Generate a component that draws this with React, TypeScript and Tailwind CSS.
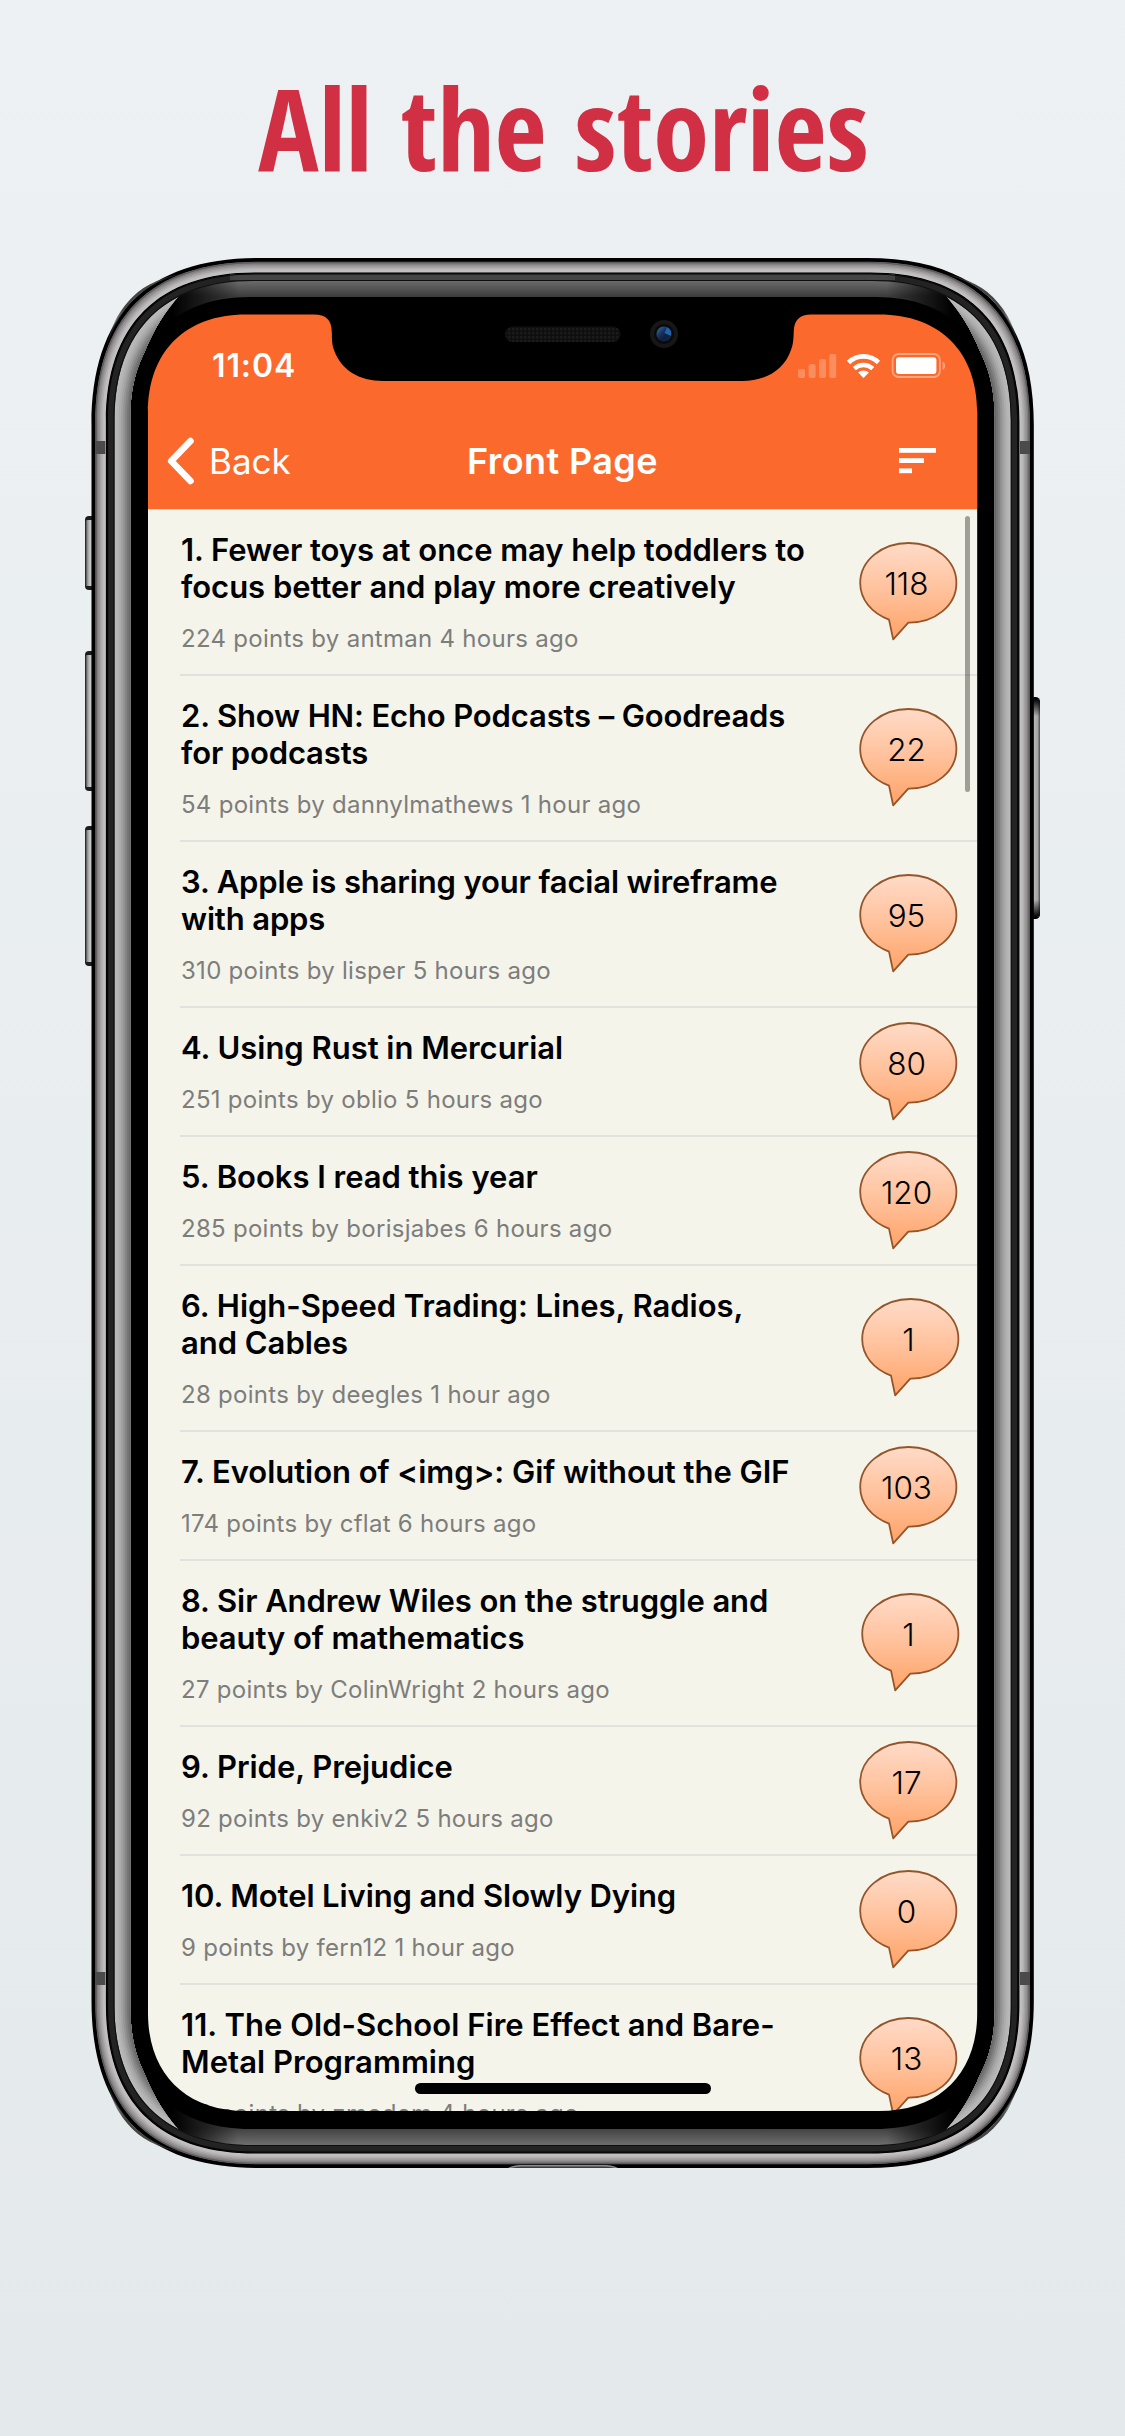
type Story = {
  lines: string[];
  meta: string;
  comments: number;
  tracking?: string;
  nudge?: boolean;
};

const STORIES: Story[] = [
  { lines: ["1. Fewer toys at once may help toddlers to", "focus better and play more creatively"], meta: "224 points by antman 4 hours ago", comments: 118 },
  { lines: ["2. Show HN: Echo Podcasts – Goodreads", "for podcasts"], meta: "54 points by dannylmathews 1 hour ago", comments: 22, tracking: "tracking-[-0.14px]" },
  { lines: ["3. Apple is sharing your facial wireframe", "with apps"], meta: "310 points by lisper 5 hours ago", comments: 95, tracking: "tracking-[-0.14px]" },
  { lines: ["4. Using Rust in Mercurial"], meta: "251 points by oblio 5 hours ago", comments: 80 },
  { lines: ["5. Books I read this year"], meta: "285 points by borisjabes 6 hours ago", comments: 120 },
  { lines: ["6. High-Speed Trading: Lines, Radios,", "and Cables"], meta: "28 points by deegles 1 hour ago", comments: 1, nudge: true },
  { lines: ["7. Evolution of <img>: Gif without the GIF"], meta: "174 points by cflat 6 hours ago", comments: 103 },
  { lines: ["8. Sir Andrew Wiles on the struggle and", "beauty of mathematics"], meta: "27 points by ColinWright 2 hours ago", comments: 1, tracking: "tracking-[-0.07px]", nudge: true },
  { lines: ["9. Pride, Prejudice"], meta: "92 points by enkiv2 5 hours ago", comments: 17 },
  { lines: ["10. Motel Living and Slowly Dying"], meta: "9 points by fern12 1 hour ago", comments: 0, tracking: "tracking-[-0.1px]" },
  { lines: ["11. The Old-School Fire Effect and Bare-", "Metal Programming"], meta: "46 points by zmodem 4 hours ago", comments: 13, tracking: "tracking-[0.04px]" },
];

/** Rounded outline of the handset, inset from its outer edge. */
function contour(inset: number) {
  const x0 = 91.5 + inset;
  const x1 = 1033.8 - inset;
  const y0 = 258 + inset;
  const y1 = 2168 - inset;
  const e = 167 - 1.22 * inset;
  const k = e * (1 - (0.665 - 0.001 * inset));
  return [
    `M${x0 + e} ${y0}H${x1 - e}`,
    `C${x1 - k} ${y0} ${x1} ${y0 + k} ${x1} ${y0 + e}`,
    `V${y1 - e}`,
    `C${x1} ${y1 - k} ${x1 - k} ${y1} ${x1 - e} ${y1}`,
    `H${x0 + e}`,
    `C${x0 + k} ${y1} ${x0} ${y1 - k} ${x0} ${y1 - e}`,
    `V${y0 + e}`,
    `C${x0} ${y0 + k} ${x0 + k} ${y0} ${x0 + e} ${y0}Z`,
  ].join("");
}

/** Screen cut-out including the sensor notch. */
const SCREEN =
  "M246 314.6H314C326 314.6 331.5 320 331.8 332C332 340 332 345 334 350C341 370 359 381 383 381H742C766 381 784 370 791 350C793 345 793.5 340 793.7 332C794 320 800 314.6 811 314.6H879C940 314.6 977.2 352 977.2 412.6V2013C977.2 2073 940 2111 879 2111H246C185 2111 148 2073 148 2013V412.6C148 352 185 314.6 246 314.6Z";

const RIM = ["#6f6d6e", "#838082", "#949193", "#a5a2a4", "#b3b0b2", "#bfbcbe", "#c3c0c2"];
const GLARE = ["#b9b9b9", "#b5b5b5", "#adadad", "#a2a2a2", "#949494", "#848484", "#757575", "#666666"];

function SideGlare({ id }: { id: string }) {
  return (
    <g clipPath={`url(#${id})`}>
      {GLARE.map((c, i) => (
        <path key={c} d={contour(23 + i * 2.1)} fill={c} />
      ))}
    </g>
  );
}

function Handset() {
  return (
    <svg className="pointer-events-none absolute inset-0" width="1125" height="2436" viewBox="0 0 1125 2436" aria-hidden="true">
      <defs>
        <linearGradient id="btnL" x1="0" x2="1">
          <stop offset="0" stopColor="#3a3a3a" />
          <stop offset=".3" stopColor="#a0a0a0" />
          <stop offset=".6" stopColor="#cbcbcb" />
          <stop offset="1" stopColor="#777" />
        </linearGradient>
        <linearGradient id="btnR" x1="0" x2="1">
          <stop offset="0" stopColor="#555" />
          <stop offset=".3" stopColor="#b5b5b5" />
          <stop offset=".7" stopColor="#a5a5a5" />
          <stop offset="1" stopColor="#4a4a4a" />
        </linearGradient>
        <linearGradient id="cap" x1="0" x2="0" y1="0" y2="1">
          <stop offset="0" stopColor="#000" />
          <stop offset=".08" stopColor="#000" stopOpacity="0" />
          <stop offset=".92" stopColor="#000" stopOpacity="0" />
          <stop offset="1" stopColor="#000" />
        </linearGradient>
        <linearGradient id="top" gradientUnits="userSpaceOnUse" x1="0" x2="0" y1="281" y2="296">
          <stop offset="0" stopColor="#6b6b6b" />
          <stop offset="1" stopColor="#3d3d3d" />
        </linearGradient>
        <linearGradient id="bottom" gradientUnits="userSpaceOnUse" x1="0" x2="0" y1="2128" y2="2144">
          <stop offset="0" stopColor="#404040" />
          <stop offset="1" stopColor="#6b6b6b" />
        </linearGradient>
        <linearGradient id="fade" gradientUnits="userSpaceOnUse" x1="172" x2="953" y1="0" y2="0">
          <stop offset="0" stopColor="#000" />
          <stop offset=".085" stopColor="#fff" />
          <stop offset=".915" stopColor="#fff" />
          <stop offset="1" stopColor="#000" />
        </linearGradient>
        <mask id="ends" maskUnits="userSpaceOnUse" x="0" y="0" width="1125" height="2436">
          <rect x="172" y="240" width="781" height="1960" fill="url(#fade)" />
        </mask>
        <linearGradient id="wedge" gradientUnits="userSpaceOnUse" x1="105" y1="355" x2="190" y2="276">
          <stop offset="0" stopColor="#444" stopOpacity="0" />
          <stop offset=".4" stopColor="#444" />
          <stop offset=".7" stopColor="#444" />
          <stop offset="1" stopColor="#444" stopOpacity="0" />
        </linearGradient>
        <clipPath id="leftGlare">
          <path d="M110 1213V270H170L181 294C152 325 131 370 131 430V1996C131 2056 152 2101 181 2132L170 2156H110Z" />
        </clipPath>
        <clipPath id="rightGlare">
          <path d="M1015 1213V270H955L944 294C973 325 994 370 994 430V1996C994 2056 973 2101 944 2132L955 2156H1015Z" />
        </clipPath>
        <clipPath id="frameOnly">
          <path d={contour(23) + contour(39)} clipRule="evenodd" />
        </clipPath>
        <pattern id="mesh" width="4" height="4" patternUnits="userSpaceOnUse">
          <rect width="4" height="4" fill="#0f0f0f" />
          <rect width="2.4" height="2.4" fill="#1b1b1b" />
        </pattern>
        <linearGradient id="lens" x1="0" x2="1" y1="0" y2="1">
          <stop offset="0" stopColor="#3a78b5" />
          <stop offset=".4" stopColor="#16305c" />
          <stop offset=".6" stopColor="#10203f" />
          <stop offset="1" stopColor="#12264c" />
        </linearGradient>
      </defs>

      {[[516, 74], [651, 140], [826, 140]].map(([y, h]) => (
        <g key={y}>
          <rect x="85" y={y} width="14" height={h} rx="4" fill="#1d1d1d" />
          <rect x="85.5" y={y + 4} width="8" height={h - 8} rx="1.5" fill="url(#btnL)" />
        </g>
      ))}
      <rect x="1026" y="697" width="14" height="222" rx="4.5" fill="#000" />
      <rect x="1032" y="699" width="8" height="218" rx="3" fill="url(#btnR)" />
      <rect x="1032" y="699" width="8" height="218" rx="3" fill="url(#cap)" />

      <path d={contour(0) + SCREEN} fillRule="evenodd" fill="#000" />
      {RIM.map((c, i) => (
        <path key={c} d={contour(3.8 + i * 1.5) + contour(14.4)} fillRule="evenodd" fill={c} />
      ))}
      <path d={contour(4) + contour(5.2)} fillRule="evenodd" fill="#5d5b5c" />
      {[1, -1].map((sx) =>
        [1, -1].map((sy) => (
          <path
            key={`${sx}${sy}`}
            transform={`translate(${sx < 0 ? 1125.3 : 0} ${sy < 0 ? 2426 : 0}) scale(${sx} ${sy})`}
            d="M105.5 352C114 318 134 292 163 280C172 276 184 274 196 272.5C172 273 152 281 138 292C118 309 109 330 105.5 352Z"
            fill="url(#wedge)"
          />
        )),
      )}
      <path d={contour(14.4) + contour(15.6)} fillRule="evenodd" fill="#000" />
      <path d={contour(15.6) + contour(23)} fillRule="evenodd" fill="#232323" />
      <g mask="url(#ends)">
        <path d="M230 274H895V280H230Z" fill="#454545" />
      </g>
      <path d={contour(15.4) + contour(16.6)} fillRule="evenodd" fill="#050505" />
      <path d={contour(22) + contour(23)} fillRule="evenodd" fill="#0d0d0d" />

      <rect x="95.3" y="441" width="10" height="13" fill="#4b4b4b" />
      <rect x="1020" y="441" width="10" height="13" fill="#4b4b4b" />
      <rect x="95.3" y="1972" width="10" height="13" fill="#4b4b4b" />
      <rect x="1020" y="1972" width="10" height="13" fill="#4b4b4b" />

      <g clipPath="url(#frameOnly)">
        <g mask="url(#ends)">
          <rect x="150" y="270" width="825" height="110" fill="url(#top)" />
          <rect x="150" y="2050" width="825" height="110" fill="url(#bottom)" />
        </g>
        <SideGlare id="leftGlare" />
        <SideGlare id="rightGlare" />
      </g>

      <path d="M508 2168C512 2165.5 518 2165 524 2165H602C608 2165 614 2165.5 618 2168Z" fill="#8b8b8b" />
      <path d="M511 2168C516 2166.6 520 2166.5 525 2166.5H601C606 2166.5 610 2166.6 615 2168Z" fill="#3c3c3c" />

      <rect x="505" y="326.5" width="115.5" height="15.5" rx="7.7" fill="url(#mesh)" />
      <circle cx="664" cy="334" r="14" fill="#171717" />
      <circle cx="664" cy="334" r="10" fill="#0a0a0c" />
      <circle cx="664" cy="334" r="7.6" fill="url(#lens)" />
      <path d="M664.5 333L667 327.3A7.6 7.6 0 0 1 671 336Z" fill="#2264a8" />
    </svg>
  );
}

function StatusIcons() {
  return (
    <svg width="148" height="26" viewBox="0 0 148 26" fill="#fff" aria-hidden="true">
      <g opacity=".24">
        <rect x="0" y="16" width="7" height="9" rx="2" />
        <rect x="10.6" y="11" width="7" height="14" rx="2" />
        <rect x="21" y="6" width="7" height="19" rx="2" />
        <rect x="31.2" y="1" width="7" height="24" rx="2" />
      </g>
      <path d="M65.5 25L60.1 19.4C62.9 16.7 68.1 16.7 70.9 19.4Z" />
      <g fill="none" stroke="#fff" strokeWidth="4.4">
        <path d="M56.3 15.6C61.5 10.7 69.5 10.7 74.7 15.6" />
        <path d="M50.5 9.4C59.1 1.4 71.9 1.4 80.5 9.4" strokeWidth="4.8" />
      </g>
      <rect x="94.6" y="1" width="47.3" height="23" rx="6" fill="none" stroke="#fff" strokeWidth="1.8" opacity=".4" />
      <rect x="98" y="4.2" width="40.4" height="16.8" rx="3" />
      <path d="M144.6 8.5C148 10 148 15.5 144.6 17Z" opacity=".4" />
    </svg>
  );
}

function Bubble({ count, nudge }: { count: number; nudge?: boolean }) {
  return (
    <div className={nudge ? "relative -mt-px mr-[17px] h-[99px] w-[99px] shrink-0" : "relative -mt-px mr-[19px] h-[99px] w-[99px] shrink-0"}>
      <svg width="99" height="99" viewBox="0 0 99 99" aria-hidden="true">
        <defs>
          <linearGradient id="bubble" x1="0" x2="0" y1="0" y2="1">
            <stop offset="0" stopColor="#ffdbc8" />
            <stop offset=".5" stopColor="#ffc19b" />
            <stop offset="1" stopColor="#ffa266" />
          </linearGradient>
        </defs>
        <path
          d="M49.6 1C76.5 1 97.4 18.8 97.4 41C97.4 63.5 76 81 49.3 80.6L34.2 97.4L30 77.6C12.5 71 1.2 57.5 1.2 41C1.2 18.8 22.6 1 49.6 1Z"
          fill="url(#bubble)"
          stroke="#95552a"
          strokeWidth="1.8"
          strokeLinejoin="round"
        />
      </svg>
      <span className="absolute inset-x-0 top-[22px] pr-1 text-center text-[31.5px] leading-10 font-[350] text-black">{count}</span>
    </div>
  );
}

function StoryRow({ story }: { story: Story }) {
  return (
    <li className="ml-8 flex shrink-0 items-center justify-between border-b-2 border-[#e1e1dd]">
      <div className="pt-[21px] pb-[18px] pl-px whitespace-nowrap">
        <h2 className={`text-[31px] leading-[37px] font-semibold text-black ${story.tracking ?? "tracking-[-0.03px]"}`}>
          {story.lines.map((line) => (
            <span key={line} className="block">{line}</span>
          ))}
        </h2>
        <p className="mt-[19px] h-[32px] text-[24px] leading-[30px] tracking-[0.28px] text-[#7d7d7b]">{story.meta}</p>
      </div>
      <Bubble count={story.comments} nudge={story.nudge} />
    </li>
  );
}

export default function App() {
  return (
    <main className="relative flex h-[2436px] w-[1125px] flex-col items-center overflow-hidden bg-linear-to-b from-[#edf1f3] to-[#e4e9ec] font-['Inter',sans-serif]">
      <h1 className="mt-[47px] pl-[2px] text-[113px] leading-[160px] font-bold whitespace-nowrap text-[#d02f44] font-['Open_Sans_Condensed','Open_Sans',sans-serif]">
        All the stories
      </h1>

      <section className="relative mt-[107px] flex h-[1797px] w-[829px] flex-col overflow-hidden rounded-[84px] bg-[#f4f4eb]">
        <header className="h-[196px] shrink-0 border-b border-[#d9dad2] bg-[#fc692d] text-white">
          <div className="flex h-[72px] items-end justify-between pt-8 pr-[31px] pl-16">
            <span className="text-[32px] leading-10 font-semibold tracking-[0.9px]">11:04</span>
            <span className="flex h-10 items-center"><StatusIcons /></span>
          </div>
          <nav className="mt-[26px] grid h-[98px] grid-cols-[1fr_auto_1fr] items-center px-[19px]">
            <span className="flex items-center gap-[15px]">
              <svg width="27" height="48" viewBox="0 0 27 48" fill="none" stroke="#fff" strokeWidth="6.6" strokeLinecap="round" strokeLinejoin="round" aria-hidden="true">
                <path d="M23.5 4L4.2 24L23.5 44" />
              </svg>
              <span className="text-[35px] leading-[42px] font-normal">Back</span>
            </span>
            <span className="text-[36px] leading-[42px] font-semibold tracking-[0.4px]">Front Page</span>
            <svg className="mr-[22px] justify-self-end" width="37" height="26" viewBox="0 0 37 26" fill="#fff" aria-hidden="true">
              <rect width="37" height="4.8" />
              <rect y="10.2" width="25" height="4.8" />
              <rect y="20.4" width="13" height="4.8" />
            </svg>
          </nav>
        </header>

        <ul className="flex flex-col">
          {STORIES.map((story) => (
            <StoryRow key={story.lines[0]} story={story} />
          ))}
        </ul>

        <span className="absolute top-[202px] right-[7px] h-[276px] w-[5px] rounded-full bg-black/35" />
        <span className="absolute bottom-[17px] left-[267px] h-[11px] w-[296px] rounded-full bg-black" />
      </section>

      <Handset />
    </main>
  );
}
